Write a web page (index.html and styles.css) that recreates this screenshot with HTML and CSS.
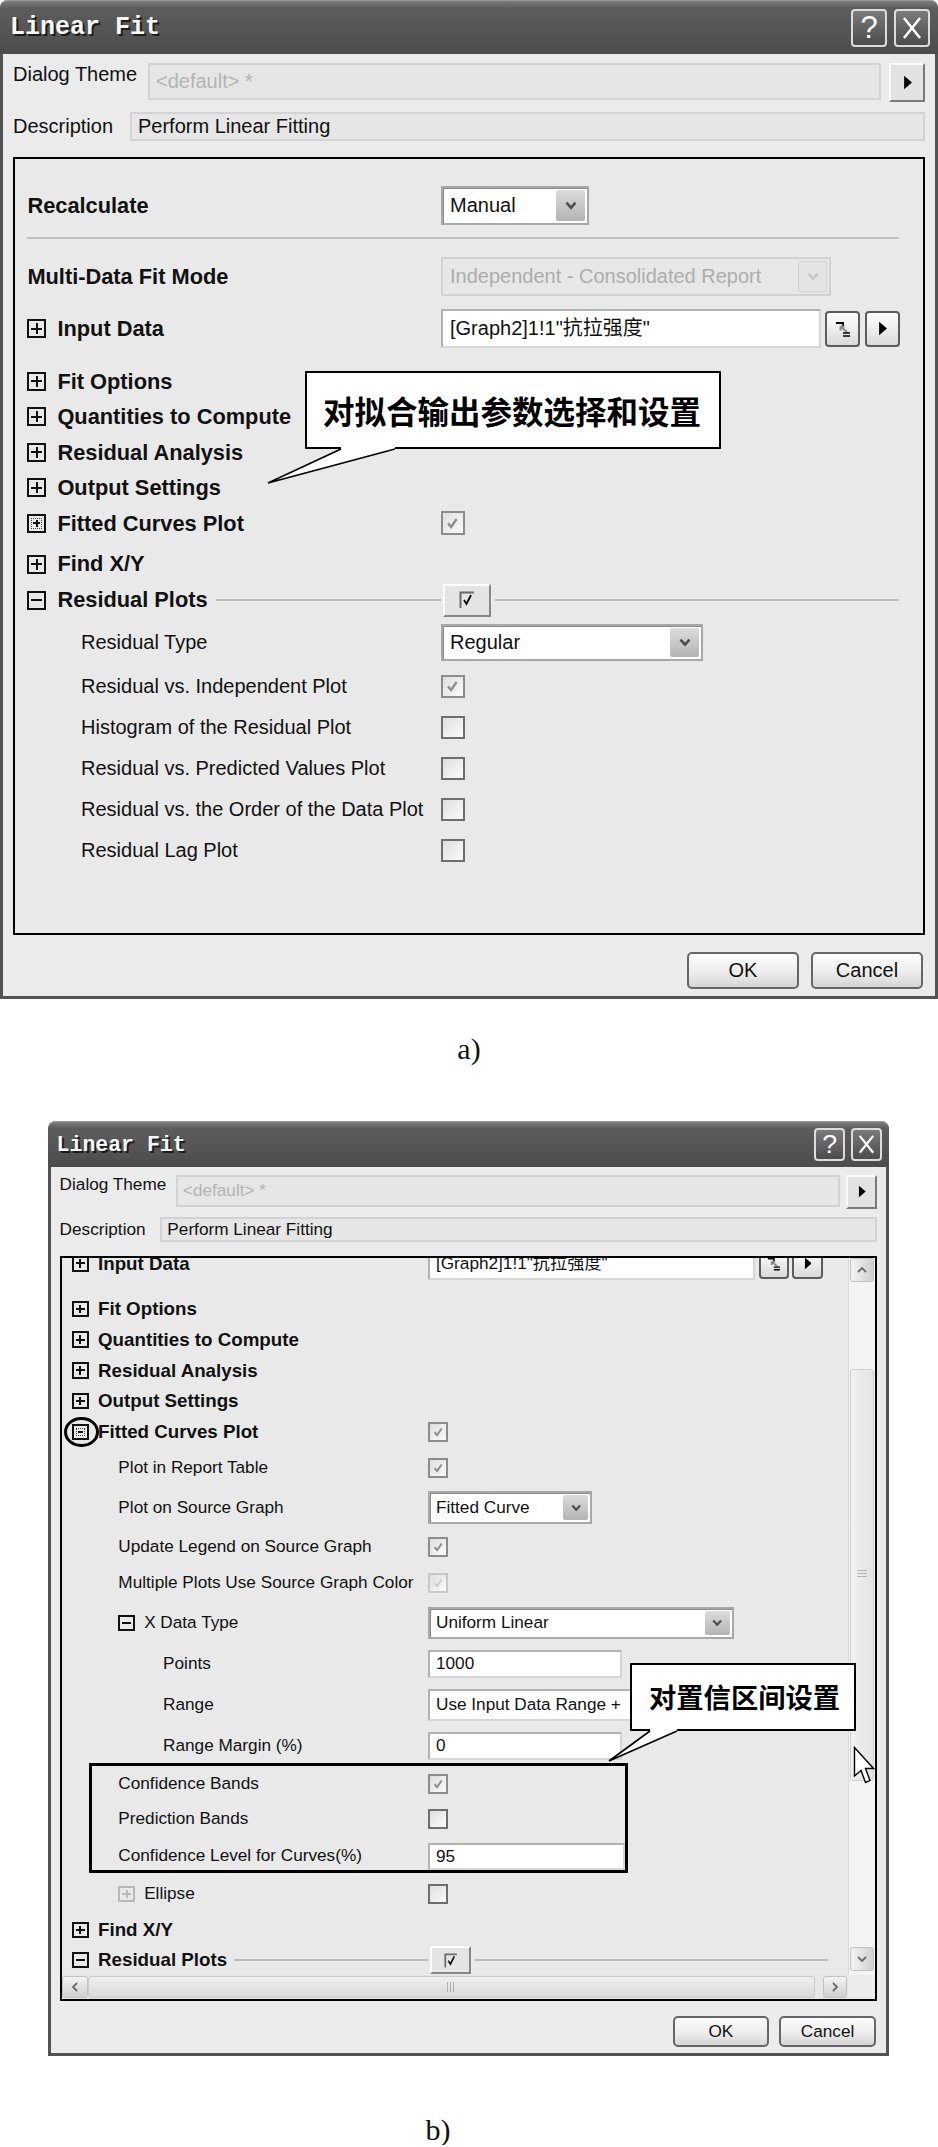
FILE: index.html
```html
<!DOCTYPE html>
<html lang="zh">

<head>
    <meta charset="utf-8">
    <title>Linear Fit</title>
    <link rel="stylesheet" href="styles.css">
</head>

<body>
    <!-- a) -->
    <div class="dialog dlg-a">
        <div class="titlebar">
            <span class="title">Linear Fit</span>
            <span class="tbtn"><span class="q">?</span></span>
            <span class="tbtn"><svg viewBox="0 0 32 34"><path d="M8 7 24 27M24 7 8 27" stroke="#fff" stroke-width="2.6" fill="none"/></svg></span>
        </div>
        <div class="meta">
            <div class="meta-row theme">
                <span class="meta-lbl">Dialog Theme</span>
                <span class="meta-field dim">&lt;default&gt; *</span>
                <span class="arrow-btn"><svg viewBox="0 0 8 12"><path d="M1 0 8 6 1 12z"/></svg></span>
            </div>
            <div class="meta-row desc">
                <span class="meta-lbl">Description</span>
                <span class="meta-field">Perform Linear Fitting</span>
            </div>
        </div>
        <div class="panel">
            <div class="row h39">
                <div class="cell node"><b>Recalculate</b></div>
                <div class="cell"><span class="combo c-manual">Manual<span class="drop"><svg viewBox="0 0 12 8"><path d="M1.5 1.5 6 6.5 10.5 1.5"/></svg></span></span></div>
            </div>
            <div class="sep"></div>
            <div class="row h39 mt18">
                <div class="cell node"><b>Multi-Data Fit Mode</b></div>
                <div class="cell"><span class="combo off c-mode">Independent - Consolidated Report<span class="drop"><svg viewBox="0 0 12 8"><path d="M1.5 1.5 6 6.5 10.5 1.5"/></svg></span></span></div>
            </div>
            <div class="row h38 mt13">
                <div class="cell node"><span class="tbox plus"></span><b>Input Data</b></div>
                <div class="cell">
                    <span class="field f-input">[Graph2]1!1"抗拉强度"</span>
                    <span class="ibtn"><svg viewBox="0 0 16 18"><path d="M1 2h7v2H1zM7 2h2v4H7z"/><path d="M12 12 5.5 6.5M5.5 6.5h4M5.5 6.5v4" stroke="#8a8a8a" stroke-width="2" fill="none"/><path d="M8 13h7M8 16h7" stroke="#000" stroke-width="1.6"/></svg></span>
                    <span class="ibtn"><svg class="tri" viewBox="0 0 8 12"><path d="M1 0 8 6 1 12z"/></svg></span>
                </div>
            </div>
            <div class="row h355 mt16">
                <div class="cell node"><span class="tbox plus"></span><b>Fit Options</b></div>
            </div>
            <div class="row h355">
                <div class="cell node"><span class="tbox plus"></span><b>Quantities to Compute</b></div>
            </div>
            <div class="row h355">
                <div class="cell node"><span class="tbox plus"></span><b>Residual Analysis</b></div>
            </div>
            <div class="row h355">
                <div class="cell node"><span class="tbox plus"></span><b>Output Settings</b></div>
            </div>
            <div class="row h355">
                <div class="cell node"><span class="tbox plus focus"></span><b>Fitted Curves Plot</b></div>
                <div class="cell"><span class="chk on"><svg viewBox="0 0 12 12"><path d="M2.5 6 5 9 9.5 2.5"/></svg></span></div>
            </div>
            <div class="row h36 mt5">
                <div class="cell node"><span class="tbox plus"></span><b>Find X/Y</b></div>
            </div>
            <div class="row h36">
                <div class="cell node"><span class="tbox"></span><b>Residual Plots</b><span class="rule"></span></div>
                <div class="cell"><span class="pbtn"><svg viewBox="0 0 16 18"><path d="M1.5 17V1.5H15" stroke="#6a6a6a" stroke-width="2" fill="none"/><path d="M5 9 7.5 13 12 4" stroke="#000" stroke-width="1.8" fill="none"/></svg></span><span class="rule"></span></div>
            </div>
            <div class="row h48">
                <div class="cell l1">Residual Type</div>
                <div class="cell"><span class="combo c-type">Regular<span class="drop"><svg viewBox="0 0 12 8"><path d="M1.5 1.5 6 6.5 10.5 1.5"/></svg></span></span></div>
            </div>
            <div class="row h41">
                <div class="cell l1">Residual vs. Independent Plot</div>
                <div class="cell"><span class="chk on"><svg viewBox="0 0 12 12"><path d="M2.5 6 5 9 9.5 2.5"/></svg></span></div>
            </div>
            <div class="row h41">
                <div class="cell l1">Histogram of the Residual Plot</div>
                <div class="cell"><span class="chk"></span></div>
            </div>
            <div class="row h41">
                <div class="cell l1">Residual vs. Predicted Values Plot</div>
                <div class="cell"><span class="chk"></span></div>
            </div>
            <div class="row h41">
                <div class="cell l1">Residual vs. the Order of the Data Plot</div>
                <div class="cell"><span class="chk"></span></div>
            </div>
            <div class="row h41">
                <div class="cell l1">Residual Lag Plot</div>
                <div class="cell"><span class="chk"></span></div>
            </div>
        </div>
        <div class="footer">
            <span class="btn">OK</span>
            <span class="btn">Cancel</span>
        </div>

        <div class="callout callout-a">对拟合输出参数选择和设置</div>
        <svg class="tail tail-a" viewBox="0 0 140 42"><path class="fill" d="M79 0H133V4L6 38 79 4z"/><path class="edge" d="M79 4 6 38 133 4"/></svg>
    </div>

    <p class="caption">a)</p>

    <!-- b) -->
    <div class="dialog dlg-b">
        <div class="titlebar">
            <span class="title">Linear Fit</span>
            <span class="tbtn"><span class="q">?</span></span>
            <span class="tbtn"><svg viewBox="0 0 32 34"><path d="M8 7 24 27M24 7 8 27" stroke="#fff" stroke-width="2.6" fill="none"/></svg></span>
        </div>
        <div class="meta">
            <div class="meta-row theme">
                <span class="meta-lbl">Dialog Theme</span>
                <span class="meta-field dim">&lt;default&gt; *</span>
                <span class="arrow-btn"><svg viewBox="0 0 8 12"><path d="M1 0 8 6 1 12z"/></svg></span>
            </div>
            <div class="meta-row desc">
                <span class="meta-lbl">Description</span>
                <span class="meta-field">Perform Linear Fitting</span>
            </div>
        </div>
        <div class="panel scroll">
            <div class="view">
                <div class="row h35 mt-n12">
                    <div class="cell node"><span class="tbox plus"></span><b>Input Data</b></div>
                    <div class="cell">
                        <span class="field f-input">[Graph2]1!1"抗拉强度"</span>
                        <span class="ibtn"><svg viewBox="0 0 16 18"><path d="M1 2h7v2H1zM7 2h2v4H7z"/><path d="M12 12 5.5 6.5M5.5 6.5h4M5.5 6.5v4" stroke="#8a8a8a" stroke-width="2" fill="none"/><path d="M8 13h7M8 16h7" stroke="#000" stroke-width="1.6"/></svg></span>
                        <span class="ibtn"><svg class="tri" viewBox="0 0 8 12"><path d="M1 0 8 6 1 12z"/></svg></span>
                    </div>
                </div>
                <div class="row h31 mt12">
                    <div class="cell node"><span class="tbox plus"></span><b>Fit Options</b></div>
                </div>
                <div class="row h31">
                    <div class="cell node"><span class="tbox plus"></span><b>Quantities to Compute</b></div>
                </div>
                <div class="row h31">
                    <div class="cell node"><span class="tbox plus"></span><b>Residual Analysis</b></div>
                </div>
                <div class="row h31">
                    <div class="cell node"><span class="tbox plus"></span><b>Output Settings</b></div>
                </div>
                <div class="row h31">
                    <div class="cell node"><span class="ring"><span class="tbox focus"></span></span><b>Fitted Curves Plot</b></div>
                    <div class="cell"><span class="chk on"><svg viewBox="0 0 12 12"><path d="M2.5 6 5 9 9.5 2.5"/></svg></span></div>
                </div>
                <div class="row h41">
                    <div class="cell l1">Plot in Report Table</div>
                    <div class="cell"><span class="chk on"><svg viewBox="0 0 12 12"><path d="M2.5 6 5 9 9.5 2.5"/></svg></span></div>
                </div>
                <div class="row h39">
                    <div class="cell l1">Plot on Source Graph</div>
                    <div class="cell"><span class="combo c-fit">Fitted Curve<span class="drop"><svg viewBox="0 0 12 8"><path d="M1.5 1.5 6 6.5 10.5 1.5"/></svg></span></span></div>
                </div>
                <div class="row h39">
                    <div class="cell l1">Update Legend on Source Graph</div>
                    <div class="cell"><span class="chk on"><svg viewBox="0 0 12 12"><path d="M2.5 6 5 9 9.5 2.5"/></svg></span></div>
                </div>
                <div class="row h33">
                    <div class="cell l1">Multiple Plots Use Source Graph Color</div>
                    <div class="cell"><span class="chk on faint"><svg viewBox="0 0 12 12"><path d="M2.5 6 5 9 9.5 2.5"/></svg></span></div>
                </div>
                <div class="row h47">
                    <div class="cell l1"><span class="tbox"></span>X Data Type</div>
                    <div class="cell"><span class="combo c-xtype">Uniform Linear<span class="drop"><svg viewBox="0 0 12 8"><path d="M1.5 1.5 6 6.5 10.5 1.5"/></svg></span></span></div>
                </div>
                <div class="row h35">
                    <div class="cell l2">Points</div>
                    <div class="cell"><span class="field f-short">1000</span></div>
                </div>
                <div class="row h47">
                    <div class="cell l2">Range</div>
                    <div class="cell"><span class="field f-range">Use Input Data Range +</span></div>
                </div>
                <div class="row h35">
                    <div class="cell l2">Range Margin (%)</div>
                    <div class="cell"><span class="field f-short">0</span></div>
                </div>
                <div class="mark">
                    <div class="row h35">
                        <div class="cell l1">Confidence Bands</div>
                        <div class="cell"><span class="chk on"><svg viewBox="0 0 12 12"><path d="M2.5 6 5 9 9.5 2.5"/></svg></span></div>
                    </div>
                    <div class="row h35">
                        <div class="cell l1">Prediction Bands</div>
                        <div class="cell"><span class="chk"></span></div>
                    </div>
                    <div class="row h34 low">
                        <div class="cell l1">Confidence Level for Curves(%)</div>
                        <div class="cell"><span class="field f-fill">95</span></div>
                    </div>
                </div>
                <div class="row h42">
                    <div class="cell l1"><span class="tbox plus dim"></span>Ellipse</div>
                    <div class="cell"><span class="chk"></span></div>
                </div>
                <div class="row h30">
                    <div class="cell node"><span class="tbox plus"></span><b>Find X/Y</b></div>
                </div>
                <div class="row h30">
                    <div class="cell node"><span class="tbox"></span><b>Residual Plots</b><span class="rule"></span></div>
                    <div class="cell"><span class="pbtn"><svg viewBox="0 0 16 18"><path d="M1.5 17V1.5H15" stroke="#6a6a6a" stroke-width="2" fill="none"/><path d="M5 9 7.5 13 12 4" stroke="#000" stroke-width="1.8" fill="none"/></svg></span><span class="rule"></span></div>
                </div>
            </div>
            <div class="vscroll">
                <span class="sbtn"><svg viewBox="0 0 10 6"><path d="M1 5 5 1 9 5"/></svg></span>
                <div class="vthumb"><span class="grip-v"></span></div>
                <span class="sbtn down"><svg viewBox="0 0 10 6"><path d="M1 1 5 5 9 1"/></svg></span>
            </div>
            <div class="hscroll">
                <span class="sbtn left"><svg viewBox="0 0 6 10"><path d="M5 1 1 5 5 9"/></svg></span>
                <div class="hthumb"><span class="grip-h"></span></div>
                <span class="sbtn right"><svg viewBox="0 0 6 10"><path d="M1 1 5 5 1 9"/></svg></span>
            </div>
            <div class="corner"></div>
        </div>
        <div class="footer">
            <span class="btn">OK</span>
            <span class="btn">Cancel</span>
        </div>

        <div class="callout callout-b">对置信区间设置</div>
        <svg class="tail tail-b" viewBox="0 0 78 38"><path class="fill" d="M46 0H73V4L5 34 46 4z"/><path class="edge" d="M46 4 5 34 73 4"/></svg>
        <svg class="cursor" viewBox="0 0 22 38"><path d="M1.5 1.5V30L8 24.5 12.5 36.5 17 34.5 12.5 22.5H20.5Z"/></svg>
    </div>

    <p class="caption caption-b">b)</p>
</body>

</html>
```

FILE: styles.css
```css
* {
    box-sizing: border-box;
}

body {
    margin: 0;
    width: 938px;
    background-color: #fff;
    color: #111;
    font-family: "Liberation Sans", "Noto Sans CJK SC", sans-serif;
}

/* window frame */

div.dialog {
    position: relative;
    background-color: #ebebeb;
    border: 3px solid #535353;
    border-top: 0;
    border-radius: 8px 8px 0 0;
    line-height: 1.15;
}

div.dlg-a {
    font-size: 20px;
    width: 938px;
}

div.dlg-b {
    font-size: 17.2px;
    width: 841px;
    margin: 57px 0 0 48px;
}

.titlebar {
    display: flex;
    align-items: center;
    gap: .35em;
    height: 2.7em;
    margin: 0 -3px;
    padding: 0 .4em 0 .5em;
    border-radius: 8px 8px 0 0;
    border-top: 1px solid #9a9a9a;
    background: linear-gradient(#7c7c7c, #5c5c5c 14%, #555 55%, #4b4b4b);
}

.title {
    flex: 1;
    padding-top: .1em;
    font-family: "Liberation Mono", monospace;
    font-weight: bold;
    font-size: 1.25em;
    color: #f6f6f6;
    text-shadow: 2px 2px 0 #1c1c1c;
}

.tbtn {
    display: flex;
    align-items: center;
    justify-content: center;
    width: 1.8em;
    height: 1.9em;
    border: 2px solid #dcdcdc;
    border-radius: 4px;
    background: linear-gradient(#7a7a7a, #4c4c4c);
}

.tbtn .q {
    color: #fff;
    font-size: 1.55em;
    line-height: 1;
}

.tbtn svg {
    width: 100%;
    height: 100%;
}

/* theme + description */

.meta {
    padding: 0 .5em;
}

.meta-row {
    display: flex;
    align-items: center;
}

.meta-row.theme {
    height: 1.95em;
    margin-top: .45em;
}

.meta-row.desc {
    height: 1.45em;
    margin-top: .5em;
}

.meta-lbl {
    flex: none;
    white-space: nowrap;
}

.theme .meta-lbl {
    width: 6.75em;
    align-self: flex-start;
}

.desc .meta-lbl {
    width: 5.85em;
}

.meta-field {
    flex: 1;
    display: flex;
    align-items: center;
    align-self: stretch;
    padding-left: .3em;
    background-color: #e6e6e6;
    border: 2px solid #d3d3d3;
    white-space: nowrap;
}

.theme .meta-field {
    align-self: flex-start;
    height: 1.85em;
}

.meta-field.dim {
    color: #b4b4b4;
}

.arrow-btn {
    display: flex;
    align-items: center;
    justify-content: center;
    width: 1.8em;
    height: 1.95em;
    margin-left: .4em;
    border: 2px solid;
    border-color: #fbfbfb #7a7a7a #7a7a7a #fbfbfb;
    background-color: #e2e2e2;
}

.arrow-btn svg,
.ibtn svg.tri {
    width: .45em;
    height: .75em;
}

/* property panel */

.panel {
    margin: .8em .5em 0;
    border: 2px solid #000;
    background-color: #e9e9e9;
}

.dlg-a .panel {
    height: 778px;
    padding-top: 27px;
}

.panel.scroll {
    display: grid;
    grid-template-columns: 1fr 27px;
    grid-template-rows: 717px 1fr;
    height: 745px;
}

.view {
    overflow: hidden;
    grid-row: 1;
    grid-column: 1;
}

.row {
    display: grid;
    grid-template-columns: 21.3em 1fr;
    align-items: center;
    padding-right: 1.2em;
    white-space: nowrap;
}

.cell {
    display: flex;
    align-items: center;
}

.node {
    padding-left: .62em;
}

.node b {
    font-size: 1.09em;
}

.l1 {
    padding-left: 3.3em;
}

.l2 {
    padding-left: 5.9em;
}

.h30 { height: 30px; }
.h31 { height: 30.75px; }
.h33 { height: 33px; }
.h34 { height: 34px; }
.h35 { height: 35px; }
.h355 { height: 35.5px; }
.h36 { height: 36px; }
.h38 { height: 38px; }
.h39 { height: 39px; }
.h41 { height: 41px; }
.h42 { height: 42px; }
.h47 { height: 47px; }
.h48 { height: 48px; }

.mt5 { margin-top: 5px; }
.mt12 { margin-top: 12.5px; }
.mt13 { margin-top: 13px; }
.mt16 { margin-top: 16.5px; }
.mt18 { margin-top: 18px; }
.mt-n12 { margin-top: -12px; }

.sep {
    height: 2px;
    margin: 12px 1.2em 0 .62em;
    background-color: #c0c0c0;
}

.rule {
    flex: 1;
    height: 2px;
    margin-left: .4em;
    background-color: #bdbdbd;
}

/* tree expander box */

.tbox {
    position: relative;
    flex: none;
    width: .95em;
    height: .95em;
    margin-right: .55em;
    border: 2px solid #111;
}

.tbox:before {
    content: "";
    position: absolute;
    left: 2px;
    right: 2px;
    top: 50%;
    height: 2px;
    margin-top: -1px;
    background-color: #111;
}

.tbox.plus:after {
    content: "";
    position: absolute;
    top: 2px;
    bottom: 2px;
    left: 50%;
    width: 2px;
    margin-left: -1px;
    background-color: #111;
}

.tbox.focus {
    outline: 1px dotted #444;
    outline-offset: -5px;
}

.tbox.focus:before {
    left: 4px;
    right: 4px;
}

.tbox.focus.plus:after {
    top: 4px;
    bottom: 4px;
}

.tbox.dim {
    border-color: #b8b8b8;
}

.tbox.dim:before,
.tbox.dim:after {
    background-color: #b8b8b8;
}

.ring {
    position: relative;
    display: flex;
}

.ring:after {
    content: "";
    position: absolute;
    top: -7px;
    bottom: -7px;
    left: -8px;
    right: -1px;
    border: 3px solid #000;
    border-radius: 50%;
}

/* controls */

.combo {
    display: flex;
    align-items: center;
    height: 1.95em;
    padding-left: .35em;
    background-color: #fff;
    border: 2px solid #a8a8a8;
    box-shadow: inset 1px 1px 0 #8a8a8a;
}

.combo .drop {
    display: flex;
    align-items: center;
    justify-content: center;
    align-self: stretch;
    width: 1.45em;
    margin: 2px 2px 2px auto;
    border-radius: 2px;
    background: linear-gradient(#dcdcdc, #b4b4b4);
}

.combo .drop svg {
    width: .6em;
    height: .42em;
    fill: none;
    stroke: #4f4f4f;
    stroke-width: 2.6;
}

.combo.off {
    color: #adadad;
    background-color: #e7e7e7;
    border-color: #d2d2d2;
    box-shadow: none;
}

.combo.off .drop {
    background: #e4e4e4;
    border: 1px solid #d4d4d4;
}

.combo.off .drop svg {
    stroke: #c6c6c6;
}

.c-manual { width: 7.4em; }
.c-mode { width: 19.5em; }
.c-type { width: 13.1em; height: 1.85em; }
.c-fit { width: 9.55em; height: 1.92em; }
.c-xtype { width: 17.8em; height: 1.86em; }

.field {
    display: flex;
    align-items: center;
    height: 1.9em;
    padding-left: .35em;
    background-color: #fff;
    border: 2px solid #b2b2b2;
    border-right-color: #d6d6d6;
    border-bottom-color: #d6d6d6;
    white-space: nowrap;
    overflow: hidden;
}

.f-input { width: 19em; height: 1.95em; }
.f-short { width: 11.3em; height: 1.63em; }
.f-range { width: 17.8em; height: 1.86em; }
.f-fill { flex: 1; height: 1.6em; }

.ibtn {
    display: flex;
    align-items: center;
    justify-content: center;
    width: 1.75em;
    height: 1.8em;
    margin-left: .22em;
    border: 2px solid #5c5c5c;
    border-radius: 4px;
    background: linear-gradient(#fff, #dadada);
}

.ibtn svg {
    width: .8em;
    height: .9em;
}

.chk {
    display: flex;
    align-items: center;
    justify-content: center;
    width: 1.18em;
    height: 1.18em;
    border: 2px solid #6e6e6e;
    background: linear-gradient(135deg, #dedede, #fbfbfb);
}

.chk.on {
    border-color: #8c8c8c;
}

.chk svg {
    width: 75%;
    height: 75%;
    fill: none;
    stroke: #8e8e8e;
    stroke-width: 2;
}

.chk.faint {
    border-color: #c8c8c8;
}

.chk.faint svg {
    stroke: #cfcfcf;
}

.pbtn {
    display: flex;
    align-items: center;
    justify-content: center;
    width: 2.4em;
    height: 1.65em;
    margin-left: 2px;
    border: 2px solid;
    border-color: #fcfcfc #878787 #878787 #fcfcfc;
    background-color: #e4e4e4;
}

.pbtn svg {
    width: .8em;
    height: .9em;
}

.pbtn + .rule {
    margin-left: .2em;
}

/* marked group in b) */

.mark {
    width: 539px;
    margin-left: 27px;
    border: 3px solid #000;
}

.mark .row {
    grid-template-columns: calc(21.3em - 30px) 1fr;
    padding-right: 0;
}

.mark .l1 {
    padding-left: calc(3.3em - 30px);
}

.row.low {
    align-items: end;
}

.row.low .l1 {
    padding-bottom: .25em;
}

/* scrollbars */

.vscroll {
    grid-row: 1;
    grid-column: 2;
    display: flex;
    flex-direction: column;
    background-color: #f3f3f3;
    border-left: 1px solid #dadada;
}

.sbtn {
    display: flex;
    flex: none;
    align-items: center;
    justify-content: center;
    height: 24px;
    margin: 0 1px;
    border: 1px solid #c2c2c2;
    border-radius: 3px;
    background: linear-gradient(90deg, #f4f4f4, #cfcfcf);
}

.sbtn svg {
    width: 10px;
    height: 6px;
    fill: none;
    stroke: #6a6a6a;
    stroke-width: 1.8;
}

.sbtn.down {
    margin-top: auto;
    margin-bottom: 4px;
}

.vthumb {
    display: flex;
    align-items: center;
    justify-content: center;
    height: 412px;
    margin: 87px 1px 0;
    border: 1px solid #d0d0d0;
    border-radius: 3px;
    background: linear-gradient(90deg, #f1f1f1, #e3e3e3);
}

.grip-v {
    width: 10px;
    height: 9px;
    background: repeating-linear-gradient(#b4b4b4 0 1px, transparent 1px 3px);
}

.hscroll {
    grid-row: 2;
    grid-column: 1;
    display: flex;
    align-items: stretch;
    background-color: #e6e6e6;
}

.hscroll .sbtn {
    height: auto;
    margin: 1px 0;
    background: linear-gradient(#f4f4f4, #cfcfcf);
}

.hscroll .sbtn svg {
    width: 6px;
    height: 10px;
}

.sbtn.left {
    width: 26px;
}

.sbtn.right {
    width: 24px;
    margin-left: 8px;
    margin-right: 1px;
}

.hthumb {
    flex: 1;
    display: flex;
    align-items: center;
    justify-content: center;
    margin: 1px 0;
    border: 1px solid #cdcdcd;
    border-radius: 3px;
    background: linear-gradient(#efefef, #d9d9d9);
}

.grip-h {
    width: 9px;
    height: 10px;
    background: repeating-linear-gradient(90deg, #b0b0b0 0 1px, transparent 1px 3px);
}

.corner {
    grid-row: 2;
    grid-column: 2;
    background-color: #ececec;
}

/* OK / Cancel */

.footer {
    display: flex;
    justify-content: flex-end;
    gap: .6em;
    padding: .85em .6em .35em 0;
}

.btn {
    display: flex;
    align-items: center;
    justify-content: center;
    width: 5.6em;
    height: 1.85em;
    border: 2px solid #666;
    border-radius: 5px;
    background: linear-gradient(#fdfdfd, #ececec 55%, #d5d5d5);
}

/* annotations */

.callout {
    position: absolute;
    z-index: 2;
    display: flex;
    align-items: center;
    background-color: #fff;
    border: 2px solid #000;
    color: #000;
    font-family: "Noto Sans CJK SC", sans-serif;
    font-weight: bold;
    white-space: nowrap;
}

.callout-a {
    left: 302px;
    top: 371px;
    width: 416px;
    height: 78px;
    padding-left: 16px;
    font-size: 31.5px;
}

.callout-b {
    left: 579px;
    top: 542px;
    width: 226px;
    height: 68px;
    padding-left: 17px;
    font-size: 27.3px;
}

.tail {
    position: absolute;
    z-index: 3;
    overflow: visible;
}

.tail .fill {
    fill: #fff;
}

.tail .edge {
    fill: none;
    stroke: #000;
    stroke-width: 1.6;
}

.tail-a {
    left: 259px;
    top: 445px;
    width: 140px;
    height: 42px;
}

.tail-b {
    left: 553px;
    top: 606px;
    width: 78px;
    height: 38px;
}

.cursor {
    position: absolute;
    z-index: 3;
    left: 802px;
    top: 625px;
    width: 22px;
    height: 38px;
    fill: #fff;
    stroke: #000;
    stroke-width: 1.4;
}

.caption {
    margin: 35px 0 0;
    font-family: "Liberation Serif", serif;
    font-size: 30px;
    line-height: 1;
    text-align: center;
}

.caption.caption-b {
    margin-top: 59px;
    padding-right: 62px;
}
```
